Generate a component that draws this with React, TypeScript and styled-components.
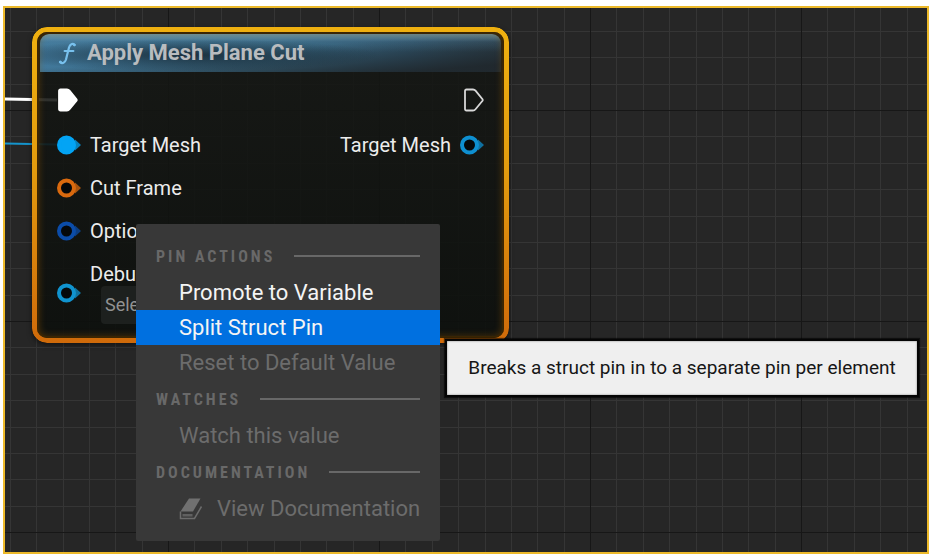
import React from "react";
import styled, { createGlobalStyle } from "styled-components";

const GlobalStyle = createGlobalStyle`
  *, *::before, *::after { box-sizing: border-box; }
  body {
    margin: 0;
    background: #ffffff;
    font-family: Roboto, "Liberation Sans", sans-serif;
  }
  button { font: inherit; border: 0; background: none; padding: 0; text-align: left; }
  svg { display: block; flex: none; }
`;

const TILE = 211;

const gridLines = (direction: string) => {
  const minor = [26, 53, 79, 106, 132, 158, 185]
    .map((p) => `transparent ${p}px, #353535 ${p}px, #353535 ${p + 1}px, transparent ${p + 1}px`)
    .join(", ");
  return `linear-gradient(${direction}, transparent 0px, ${minor})`;
};

const majorLine = (direction: string) =>
  `linear-gradient(${direction}, #171717 0px, #171717 1px, transparent 1px)`;

const Page = styled.main`
  display: flex;
  min-height: 100vh;
  padding: 6px 14px 5px 3px;
`;

const Graph = styled.section`
  position: relative;
  flex: 1;
  overflow: hidden;
  border: 2px solid #ecb92a;
  background-color: #262626;
  background-image: ${majorLine("to right")}, ${majorLine("to bottom")},
    ${gridLines("to right")}, ${gridLines("to bottom")};
  background-size: ${TILE}px ${TILE}px;
  background-position: 163px 102px;
`;

const Wires = styled.svg`
  position: absolute;
  left: 0;
  top: 80px;
`;

const Node = styled.article`
  position: absolute;
  left: 27px;
  top: 19px;
  width: 477px;
  padding: 7px 5px 5px;
  border-radius: 15px;
  background: linear-gradient(rgba(21, 23, 20, 0.88), rgba(12, 15, 12, 0.9));
  box-shadow: 0 2px 5px rgba(0, 0, 0, 0.5);

  &::before {
    content: "";
    position: absolute;
    inset: 0;
    padding: 5px;
    border-radius: 15px;
    background: linear-gradient(#efb010, #e39b0e 45%, #cf6a0a);
    mask: linear-gradient(#000 0 0) content-box exclude, linear-gradient(#000 0 0);
  }

  &::after {
    content: "";
    position: absolute;
    inset: 5px;
    border-radius: 10px;
    box-shadow: inset 0 0 0 2px rgba(60, 38, 2, 0.85), inset 0 0 6px 3px rgba(150, 90, 0, 0.35);
    pointer-events: none;
  }
`;

const NodeHeader = styled.header`
  display: flex;
  align-items: center;
  gap: 10px;
  height: 38px;
  margin: 0 3px;
  padding: 0 18px;
  border-radius: 9px 9px 0 0;
  background:
    radial-gradient(ellipse 190px 16px at 150px 21px, rgba(20, 34, 44, 0.8), transparent),
    linear-gradient(to bottom, rgba(130, 185, 210, 0.6), rgba(90, 140, 170, 0.2) 8px, transparent 18px),
    linear-gradient(to bottom right, transparent 45%, rgba(30, 36, 40, 0.85) 90%),
    linear-gradient(to right, #41789a, #386883 50%, #2f536a 80%, #2c414e);
`;

const NodeTitle = styled.h1`
  margin: 0;
  font-size: 22px;
  line-height: 28px;
  font-weight: 700;
  color: #b9bcbf;
  white-space: nowrap;
`;

const NodeBody = styled.div`
  display: flex;
  flex-direction: column;
  padding: 5px 20px 14px 20px;
`;

const PinRow = styled.div<{ $exec?: boolean }>`
  display: flex;
  align-items: center;
  justify-content: space-between;
  height: ${(p) => (p.$exec ? 46 : 43)}px;
`;

const Pin = styled.div`
  display: flex;
  align-items: center;
  gap: 9px;
`;

const PinLabel = styled.span`
  font-size: 20px;
  line-height: 24px;
  color: #ececec;
  white-space: nowrap;
`;

const AssetPin = styled(Pin)`
  margin-top: 10px;
`;

const AssetField = styled.div`
  display: flex;
  flex-direction: column;
  align-items: flex-start;
`;

const AssetButton = styled.button`
  height: 38px;
  margin-left: 11px;
  padding: 0 4px;
  border-radius: 4px;
  background: #1d201e;
  color: #929292;
  font-size: 18px;
  line-height: 24px;
`;

const Menu = styled.div`
  position: absolute;
  left: 131px;
  top: 216px;
  width: 304px;
  padding: 13px 0 15px;
  border-radius: 2px;
  background: #383838;
`;

const MenuHeading = styled.h2`
  display: flex;
  align-items: center;
  gap: 19px;
  height: 38px;
  margin: 0;
  padding: 0 20px;
  font-family: "Roboto Condensed", Roboto, sans-serif;
  font-size: 16px;
  font-weight: 700;
  letter-spacing: 3px;
  color: #696969;

  &::after {
    content: "";
    flex: 1;
    height: 2px;
    background: #686868;
  }
`;

const MenuItem = styled.button<{ $active?: boolean }>`
  display: flex;
  align-items: center;
  gap: 14px;
  width: 100%;
  height: 35px;
  padding: 0 0 0 43px;
  font-size: 22px;
  line-height: 28px;
  white-space: nowrap;
  color: #f4f4f4;
  background: ${(p) => (p.$active ? "#0070e0" : "transparent")};

  &:disabled { color: #6c6c6c; }
`;

const Tooltip = styled.div`
  position: absolute;
  left: 440px;
  top: 331px;
  min-width: 474px;
  padding: 14px 16px;
  border: 2px solid #050505;
  background: #efefef;
  box-shadow: inset 0 0 2px #777777, 0 0 1px 1px rgba(0, 0, 0, 0.6);
  font-size: 19px;
  line-height: 26px;
  text-align: center;
  white-space: nowrap;
  color: #161616;
`;

const DataPinIcon = ({ color, filled }: { color: string; filled?: boolean }) => (
  <svg width="24" height="20" viewBox="0 0 24 20" aria-hidden="true">
    <path d="M18 4.5 24 10 18 15.500Z" fill={color} opacity="0.75" />
    <circle cx="9.500" cy="10" r="7.500" fill={filled ? color : "#05080a"} stroke={color} strokeWidth="4" />
  </svg>
);

const ExecPinIcon = ({ filled }: { filled?: boolean }) => (
  <svg width="21" height="24" viewBox="0 0 21 24" aria-hidden="true">
    <path
      d="M3.500 1.500H10Q11.500 1.500 12.500 2.700L19.500 11.200Q20 12 19.500 12.800L12.500 21.300Q11.500 22.500 10 22.500H3.500Q2 22.500 2 21V3Q2 1.500 3.500 1.500Z"
      fill={filled ? "#ffffff" : "none"}
      stroke={filled ? "#ffffff" : "#d8d8d8"}
      strokeWidth="1.800"
    />
  </svg>
);

const FunctionIcon = () => (
  <svg width="19" height="23" viewBox="0 0 19 23" fill="none" stroke="#78c1ee" strokeLinecap="round" aria-hidden="true">
    <path d="M16.500 2.600C14.500 1.300 12 2 11 5.500L8 17.500C7 20.700 4.400 22.200 2 20.200" strokeWidth="2.200" />
    <path d="M6.500 9H15.500" strokeWidth="1.900" />
    <circle cx="16.300" cy="3" r="0.900" fill="#78c1ee" />
    <circle cx="2.300" cy="19.900" r="0.900" fill="#78c1ee" />
  </svg>
);

const BookIcon = () => (
  <svg width="24" height="22" viewBox="0 0 24 22" aria-hidden="true">
    <path d="M10 0.500H21.500L14 13.500H1.500Z" fill="#707070" />
    <path d="M1.500 13.500V20.500H15.500L22.500 8.500" fill="none" stroke="#6c6c6c" strokeWidth="1.500" />
    <path d="M3.500 16H13.500V18.500H3.500Z" fill="#606060" />
  </svg>
);

export default function App() {
  return (
    <>
      <GlobalStyle />
      <Page>
        <Graph aria-label="Blueprint graph">
          <Wires width="60" height="64" viewBox="0 0 60 64" fill="none" aria-hidden="true">
            <path d="M0 11 52 12" stroke="#ffffff" strokeWidth="3" />
            <path d="M0 55.500 52 56.500" stroke="#1594cb" strokeWidth="2" />
          </Wires>
          <Node>
            <NodeHeader>
              <FunctionIcon />
              <NodeTitle>Apply Mesh Plane Cut</NodeTitle>
            </NodeHeader>
            <NodeBody>
              <PinRow $exec>
                <ExecPinIcon filled />
                <ExecPinIcon />
              </PinRow>
              <PinRow>
                <Pin>
                  <DataPinIcon color="#03a4f4" filled />
                  <PinLabel>Target Mesh</PinLabel>
                </Pin>
                <Pin>
                  <PinLabel>Target Mesh</PinLabel>
                  <DataPinIcon color="#0e8fd0" />
                </Pin>
              </PinRow>
              <PinRow>
                <Pin>
                  <DataPinIcon color="#d9690e" />
                  <PinLabel>Cut Frame</PinLabel>
                </Pin>
              </PinRow>
              <PinRow>
                <Pin>
                  <DataPinIcon color="#0b4ca8" />
                  <PinLabel>Options</PinLabel>
                </Pin>
              </PinRow>
              <AssetPin>
                <DataPinIcon color="#1093cf" />
                <AssetField>
                  <PinLabel id="debug-label">Debug</PinLabel>
                  <AssetButton type="button" aria-describedby="debug-label">Select Asset</AssetButton>
                </AssetField>
              </AssetPin>
            </NodeBody>
          </Node>
          <Menu role="menu">
            <MenuHeading>PIN ACTIONS</MenuHeading>
            <MenuItem type="button" role="menuitem">Promote to Variable</MenuItem>
            <MenuItem type="button" role="menuitem" $active aria-describedby="split-tip">Split Struct Pin</MenuItem>
            <MenuItem type="button" role="menuitem" disabled>Reset to Default Value</MenuItem>
            <MenuHeading>WATCHES</MenuHeading>
            <MenuItem type="button" role="menuitem" disabled>Watch this value</MenuItem>
            <MenuHeading>DOCUMENTATION</MenuHeading>
            <MenuItem type="button" role="menuitem" disabled>
              <BookIcon />
              View Documentation
            </MenuItem>
          </Menu>
          <Tooltip role="tooltip" id="split-tip">
            Breaks a struct pin in to a separate pin per element
          </Tooltip>
        </Graph>
      </Page>
    </>
  );
}
